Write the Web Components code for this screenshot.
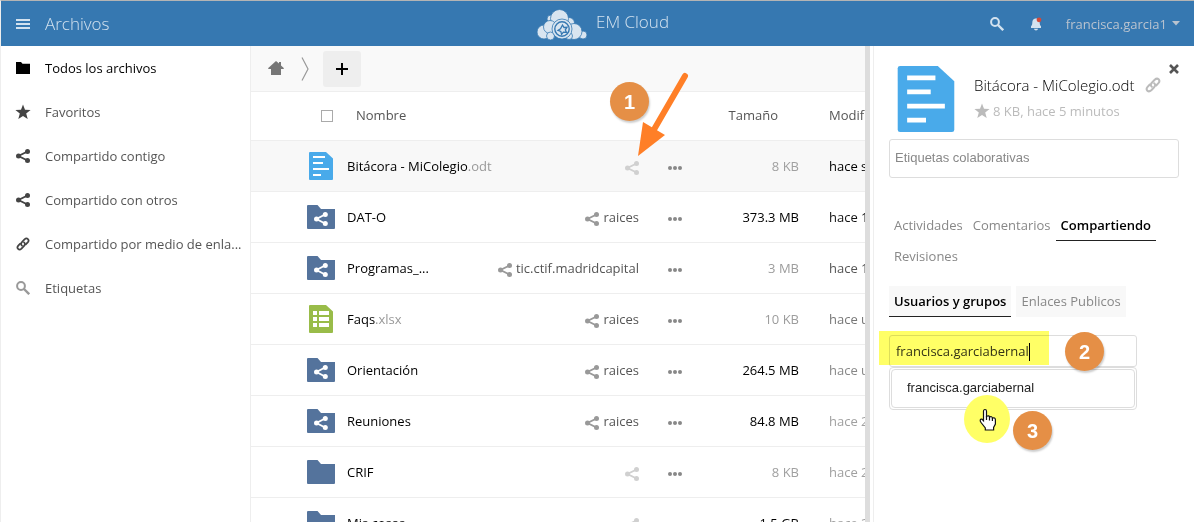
<!DOCTYPE html>
<html lang="es">
<head>
<meta charset="utf-8">
<title>Archivos - EM Cloud</title>
<style>
  html, body { height: 100%; }
  body { margin: 0; overflow: hidden; background: #fff; font: 13px/20px "Open Sans", "Liberation Sans", sans-serif; color: #000; }
</style>
</head>
<body>
<cloud-app>
  <top-bar slot="header" section="Archivos" brand="EM Cloud" user="francisca.garcia1"></top-bar>
  <side-nav slot="nav">
    <nav-item icon="folder" active>Todos los archivos</nav-item>
    <nav-item icon="star">Favoritos</nav-item>
    <nav-item icon="share">Compartido contigo</nav-item>
    <nav-item icon="share">Compartido con otros</nav-item>
    <nav-item icon="link">Compartido por medio de enla...</nav-item>
    <nav-item icon="search" faded>Etiquetas</nav-item>
  </side-nav>
  <file-browser slot="main"></file-browser>
  <details-panel slot="details"></details-panel>
</cloud-app>

<script>
const ICONS = {
  menu: ['0 0 14 10', '<path d="M0 0h14v2H0zM0 4h14v2H0zM0 8h14v2H0z"/>'],
  folder: ['0 0 14 12', '<path d="M0 0h5l1.5 1.7H14V12H0z"/>'],
  star: ['0 0 16 16', '<path d="M8 .6l2 5.1 5.6.3-4.400 3.500 1.500 5.600L8 12l-4.700 3.100 1.500-5.600L.4 6 6 5.700z"/>'],
  share: ['0 0 14 14', '<path d="M11.500 2.500L2.500 7l9 4.500" fill="none" stroke="currentColor" stroke-width="1.900"/><circle cx="11.500" cy="2.500" r="2.500"/><circle cx="2.500" cy="7" r="2.500"/><circle cx="11.500" cy="11.500" r="2.500"/>'],
  link: ['0 0 16 16', '<g fill="none" stroke="currentColor" stroke-width="2" stroke-linecap="round"><path d="M6.800 9.800C5 8.300 6 6.500 7.300 5.200l2.400-2.500c3-2.700 6.200.5 3.700 3.500l-2.200 2.300"/><path d="M9.200 6.200c1.800 1.500.8 3.300-.5 4.600l-2.400 2.500c-3 2.700-6.200-.5-3.700-3.500l2.200-2.300"/></g>'],
  search: ['0 0 14 14', '<circle cx="5" cy="5" r="3.900" fill="none" stroke="currentColor" stroke-width="2"/><path d="M8 8l5.200 5.200" stroke="currentColor" stroke-width="2.400"/>'],
  bell: ['0 0 12 14', '<path d="M6 1.500c-3 0-3.600 2.300-3.700 4.500C2.200 8 1.500 8.800 1 9.300V11h10V9.300c-.5-.5-1.200-1.300-1.300-3.300C9.600 3.800 9 1.500 6 1.500zM4 11.800h4C7.800 13 7 13.500 6 13.500S4.200 13 4 11.800z"/><circle cx="9" cy="2.800" r="2.400" fill="#d2493a"/>'],
  caret: ['0 0 8 5', '<path d="M0 0h8L4 4.500z"/>'],
  home: ['0 0 16 14', '<path d="M8 0l3 2.600V1h2v3.400L16 7.300l-.6.700H13v6H3V8H.6L0 7.300z"/>'],
  chevron: ['0 0 8 24', '<path d="M1 .5L7 12 1 23.500" fill="none" stroke="currentColor" stroke-width="1.200"/>'],
  plus: ['0 0 12 12', '<path d="M5 0h2v5h5v2H7v5H5V7H0V5h5z"/>'],
  more: ['0 0 14 4', '<circle cx="2" cy="2" r="2"/><circle cx="7" cy="2" r="2"/><circle cx="12" cy="2" r="2"/>'],
  close: ['0 0 10 10', '<path d="M1 1l8 8M9 1L1 9" stroke="currentColor" stroke-width="2.600"/>'],
  document: ['0 0 24 28', '<path d="M1 0h16l7 6.500V27a1 1 0 0 1-1 1H1a1 1 0 0 1-1-1V1a1 1 0 0 1 1-1z" fill="#49aaea"/><path d="M4 4h12v2H4zM4 10h10v2H4zM4 16h16v2H4zM4 22h8v2H4z" fill="#fff"/>'],
  sheet: ['0 0 24 28', '<path d="M1 0h16l7 6.500V27a1 1 0 0 1-1 1H1a1 1 0 0 1-1-1V1a1 1 0 0 1 1-1z" fill="#99bc49"/><path d="M4 6h4v4H4zM10 6h10v4H10zM4 12h4v4H4zM10 12h10v4H10zM4 18h4v4H4zM10 18h10v4H10z" fill="#fff"/>'],
  'big-folder': ['0 0 28 24', '<path d="M1 0h9.500L14 4h14v19a1 1 0 0 1-1 1H1a1 1 0 0 1-1-1V1a1 1 0 0 1 1-1z" fill="#54739c"/>'],
  'shared-folder': ['0 0 28 24', '<path d="M1 0h9.500L14 4h14v19a1 1 0 0 1-1 1H1a1 1 0 0 1-1-1V1a1 1 0 0 1 1-1z" fill="#54739c"/><path d="M18 9.500L9.500 14l8.500 4.500" fill="none" stroke="#fff" stroke-width="1.900"/><g fill="#fff"><circle cx="18.300" cy="9.500" r="2.500"/><circle cx="9.500" cy="14" r="2.500"/><circle cx="18.300" cy="18.500" r="2.500"/></g>'],
  logo: ['0 0 60 34', '<g stroke="#3678b1" stroke-width=".8"><circle cx="42" cy="16" r="5.500"/><circle cx="24" cy="12" r="4"/><circle cx="32.500" cy="11.500" r="9"/><circle cx="17" cy="25" r="7"/><circle cx="56" cy="28" r="4"/><circle cx="47" cy="24.500" r="8"/><circle cx="23" cy="20" r="6.500"/><circle cx="23.500" cy="29" r="4"/><circle cx="42" cy="29" r="3.500"/><circle cx="35" cy="22" r="10"/></g><circle cx="35" cy="22" r="7.200" fill="none" stroke="#3678b1" stroke-width="1.400"/><path d="M35.500 18l1.500 2.500 3 -.2-1.700 2.500 1.200 2.700-3.100-.3-1.800 2.200-.8-3-2.800-1.100 2.500-1.600z" fill="#d9e5f0" stroke="#3678b1" stroke-width="1.300"/>'],
};

function define(name, css, html, setup) {
  const template = document.createElement('template');
  customElements.define(name, class extends HTMLElement {
    connectedCallback() {
      if (this.shadowRoot) return;
      const root = this.attachShadow({ mode: 'open' });
      template.innerHTML = `<style>*{box-sizing:border-box}${css}</style>${typeof html === 'function' ? html(this) : html}`;
      root.append(template.content.cloneNode(true));
      if (setup) setup(root, this);
    }
  });
}

define('ui-icon', `:host{display:inline-flex;flex:none} svg{display:block;width:100%;height:100%;fill:currentColor}`,
  el => { const [box, body] = ICONS[el.getAttribute('name')]; return `<svg viewBox="${box}" aria-hidden="true">${body}</svg>`; });

define('step-badge', `
  :host{display:flex;align-items:center;justify-content:center;width:39px;height:39px;border-radius:50%;background:#e58f46;color:#fff;
    font:bold 20px/20px "Liberation Sans",Arial,sans-serif;box-shadow:1px 2px 2px rgba(0,0,0,.2)}`, `<slot></slot>`);

define('cloud-app', `
  :host{display:flex;flex-direction:column;height:100vh;border-top:1px solid #b4b4b4;border-left:1px solid #eee;box-sizing:border-box}
  .body{display:flex;flex:1;min-height:0}
  nav{flex:0 0 250px;border-right:1px solid #eee}
  main{flex:1;min-width:0;overflow:hidden;border-right:5px solid #ddd}
  aside{flex:0 0 324px;padding-left:3px}`,
  `<slot name="header"></slot><div class="body"><nav><slot name="nav"></slot></nav><main><slot name="main"></slot></main><aside><slot name="details"></slot></aside></div>`);

define('top-bar', `
  :host{display:block}
  header{display:grid;grid-template-columns:1fr auto 1fr;align-items:center;height:45px;padding:0 14px 0 15px;background:#3678b1;color:#d3e2ef}
  .left,.brand,.right{display:flex;align-items:center}
  button{display:flex;align-items:center;padding:0;border:0;background:none;color:inherit;font:inherit;cursor:pointer}
  .left{gap:15px;font-size:17px;line-height:24px;font-weight:300}
  .left a,.brand{color:inherit;text-decoration:none}
  .brand{gap:9px;font-size:17px;line-height:24px;font-weight:300}
  .brand span{padding-bottom:4px}
  .right{justify-content:flex-end}
  .menu ui-icon{width:14px;height:10px}
  .logo{width:60px;height:34px;color:#d9e5f0}
  .find ui-icon{width:14px;height:14px}
  .bell{margin:0 24px 0 26px}
  .bell ui-icon{width:12px;height:14px}
  .user{gap:5px;color:#b9c3cf}
  .user ui-icon{width:8px;height:5px}`,
  el => `<header>
    <div class="left"><button class="menu" aria-label="Menú"><ui-icon name="menu"></ui-icon></button><a href="#">${el.getAttribute('section')}</a></div>
    <a class="brand" href="#"><ui-icon class="logo" name="logo"></ui-icon><span>${el.getAttribute('brand')}</span></a>
    <div class="right"><button class="find" aria-label="Buscar"><ui-icon name="search"></ui-icon></button>
      <button class="bell" aria-label="Notificaciones"><ui-icon name="bell"></ui-icon></button>
      <button class="user">${el.getAttribute('user')}<ui-icon name="caret"></ui-icon></button></div>
  </header>`);

define('side-nav', `:host{display:block}`, `<slot></slot>`);

define('nav-item', `
  :host{display:block;color:#555}
  :host([active]){color:#000}
  a{display:flex;align-items:center;gap:15px;height:44px;padding:0 8px 0 15px;color:inherit;text-decoration:none;white-space:nowrap}
  ui-icon{width:14px;height:14px;color:#444}
  .star{width:16px;height:16px;margin:0 -1px}
  .folder{height:12px;color:#000}
  :host([faded]) ui-icon{color:#999}`,
  el => `<a href="#"><ui-icon class="${el.getAttribute('icon')}" name="${el.getAttribute('icon')}"></ui-icon><slot></slot></a>`);

const FILES = [
  { icon: 'document', name: 'Bitácora - MiColegio', ext: '.odt', size: '8 KB', sizeColor: '#a0a0a0', date: 'hace s', dateColor: '#000', selected: true },
  { icon: 'shared-folder', name: 'DAT-O', share: 'raices', size: '373.3 MB', sizeColor: '#000', date: 'hace 1', dateColor: '#111' },
  { icon: 'shared-folder', name: 'Programas_...', share: 'tic.ctif.madridcapital', size: '3 MB', sizeColor: '#9c9c9c', date: 'hace 1', dateColor: '#555' },
  { icon: 'sheet', name: 'Faqs', ext: '.xlsx', share: 'raices', size: '10 KB', sizeColor: '#9c9c9c', date: 'hace u', dateColor: '#777' },
  { icon: 'shared-folder', name: 'Orientación', share: 'raices', size: '264.5 MB', sizeColor: '#000', date: 'hace u', dateColor: '#888' },
  { icon: 'shared-folder', name: 'Reuniones', share: 'raices', size: '84.8 MB', sizeColor: '#000', date: 'hace 2', dateColor: '#a0a0a0' },
  { icon: 'big-folder', name: 'CRIF', size: '8 KB', sizeColor: '#a0a0a0', date: 'hace 2', dateColor: '#a0a0a0' },
  { icon: 'big-folder', name: 'Mis cosas', size: '1.5 GB', sizeColor: '#000', date: 'hace 2', dateColor: '#a0a0a0' },
];

define('file-table', `
  :host{display:block}
  table{width:100%;table-layout:fixed;border-collapse:separate;border-spacing:0}
  th,td{padding:0;border-bottom:1px solid #eee;white-space:nowrap;overflow:hidden;font-weight:400;text-align:left}
  th{height:49px;padding-bottom:2px;color:#555}
  td{height:51px}
  .pick{width:96px;text-align:right}
  .size{width:117px;text-align:right}
  .date{width:66px;padding-left:30px}
  th.pick{padding-right:14px} th.name{padding-left:9px} th.size{padding-right:21px}
  td.pick{padding-right:12px}
  td.pick.file{padding-right:14px}
  tr.selected td{background:#f8f8f8}
  input{appearance:none;display:block;width:12px;height:12px;margin:1px 0 0 auto;border:1px solid #aaa;background:#fff}
  td.pick ui-icon{display:block;width:28px;height:24px;margin-left:auto}
  td.pick.file ui-icon{width:24px;height:28px}
  .row{display:flex;align-items:center}
  a{color:inherit;text-decoration:none}
  .title{flex:1}
  .ext{color:#999}
  .share,.more{display:flex;align-items:center;padding:0;border:0;background:none}
  .share{gap:4px;color:#555}
  .share ui-icon,.more ui-icon{position:relative;top:2px;width:14px;height:14px;color:#999}
  .share.none ui-icon{color:#d0d0d0}
  .more{margin-left:29px}
  .more ui-icon{height:4px;color:#888}`,
  () => `<table><thead><tr><th class="pick"><input type="checkbox" aria-label="Seleccionar todo"></th><th class="name">Nombre</th><th class="size">Tamaño</th><th class="date">Modif</th></tr></thead><tbody>${
    FILES.map(f => `<tr class="${f.selected ? 'selected' : ''}"><td class="pick ${f.icon.includes('folder') ? '' : 'file'}"><ui-icon name="${f.icon}"></ui-icon></td>
    <td><div class="row"><a class="title" href="#">${f.name}<span class="ext">${f.ext || ''}</span></a>
    <a class="share ${f.share ? '' : 'none'}" href="#" aria-label="Compartir"><ui-icon name="share"></ui-icon>${f.share ? `<span>${f.share}</span>` : ''}</a>
    <button class="more" aria-label="Acciones"><ui-icon name="more"></ui-icon></button></div></td>
    <td class="size" style="color:${f.sizeColor}">${f.size}</td><td class="date" style="color:${f.dateColor}">${f.date}</td></tr>`).join('')
  }</tbody></table>`);

define('file-browser', `
  :host{display:block;position:relative}
  .bar{display:flex;align-items:center;height:46px;padding-left:17px;background:#f9f9f9;border-bottom:1px solid #eee}
  .home{display:flex;color:#777}
  .home ui-icon{width:16px;height:14px;margin-bottom:2px}
  .chevron{width:8px;height:24px;margin:0 14px 0 17px;color:#999}
  button{display:flex;align-items:center;justify-content:center;width:38px;height:36px;padding:0;border:0;border-radius:3px;background:#eee;color:#000}
  button ui-icon{width:12px;height:12px}
  step-badge{position:absolute;right:216px;top:36px}
  .arrow{position:absolute;right:176px;top:25px;width:54px;height:88px}`,
  `<div class="bar"><a class="home" href="#" aria-label="Inicio"><ui-icon name="home"></ui-icon></a><ui-icon class="chevron" name="chevron"></ui-icon><button aria-label="Nuevo"><ui-icon name="plus"></ui-icon></button></div>
  <file-table></file-table>
  <step-badge>1</step-badge>
  <svg class="arrow" viewBox="0 0 54 88" aria-hidden="true"><path d="M50 5L17 62" stroke="#ff7f27" stroke-width="6" stroke-linecap="round"/><path d="M3 85l5-34 22 13z" fill="#ff7f27"/></svg>`);

define('tab-item', `
  :host{display:block}
  button{display:block;height:31px;padding:0 5px;border:0;border-bottom:1px solid transparent;background:none;color:#888;font:inherit}
  :host([boxed]) button{background:#f8f8f8}
  :host([current]) button{color:#000;font-weight:600;border-bottom-color:#222}`,
  el => `<button role="tab" aria-selected="${el.hasAttribute('current')}"><slot></slot></button>`);

define('share-picker', `
  :host{display:block;position:relative;width:248px}
  input{display:block;width:100%;height:32px;padding:0 6px;border:1px solid #ddd;border-radius:3px;background:#fff;color:#333;font:inherit;outline:0}
  ul{list-style:none;margin:0;padding:1px;border:1px solid #ddd;border-radius:4px}
  button{display:block;width:100%;height:39px;padding:0 0 2px 15px;border:1px solid #ddd;border-radius:4px;background:#fff;color:#222;text-align:left;font:13px/20px "Liberation Sans",Arial,sans-serif}
  .mark{position:absolute;left:-10px;top:-4px;width:170px;height:34px;background:#ff6;mix-blend-mode:multiply}
  .caret{position:absolute;left:140px;top:8px;width:1px;height:18px;background:#000}
  .spot{position:absolute;left:75px;top:60px;width:46px;height:48px;border-radius:50%;background:#ff6}
  .hand{position:absolute;left:90px;top:73px;width:18px;height:23px}
  .two{position:absolute;left:176px;top:-3px}
  .three{position:absolute;left:124px;top:76px}`,
  `<input type="text" value="francisca.garciabernal" aria-label="Compartir con usuarios o grupos">
  <ul><li><button>francisca.garciabernal</button></li></ul>
  <div class="mark"></div><div class="caret"></div><div class="spot"></div>
  <svg class="hand" viewBox="0 0 18 23" aria-hidden="true"><path d="M6 1.500c1 0 1.500.8 1.500 1.800v5c2-1 2.800-.4 3 .7 1.500-.8 2.700-.2 2.900 1 1.800-.6 3 .2 3 1.800v4.200l-1.800 3.500V22H6.300v-2L2 14.500c-1.500-2-.8-3.700.9-3.400l1.600 1.700V3.300c0-1 .5-1.800 1.500-1.800z" fill="#fff" stroke="#111" stroke-width="1.200"/><path d="M7.500 8v4M10.500 9v3.500M13.400 10v3" fill="none" stroke="#111" stroke-width="1.200"/></svg>
  <step-badge class="two">2</step-badge><step-badge class="three">3</step-badge>`);

define('details-panel', `
  :host{display:block;position:relative;height:100%;padding:20px 15px 0;border-left:1px solid #eee;box-sizing:border-box}
  .top{display:flex;gap:19px;padding-left:8px;height:66px}
  .thumb{width:58px;height:66px}
  h2{display:flex;align-items:center;gap:11px;margin:8px 0 5px;font-size:15px;line-height:22px;font-weight:300;color:#000;white-space:nowrap}
  h2 ui-icon{width:16px;height:16px;color:#bbb}
  .meta{display:flex;align-items:center;gap:3px;margin:0;color:#bbb;white-space:nowrap}
  .meta ui-icon{width:16px;height:16px}
  .close{position:absolute;right:15px;top:18px;display:flex;padding:0;border:0;background:none;color:#555}
  .close ui-icon{width:10px;height:10px}
  .tags{display:block;width:100%;height:39px;margin:7px 0 32px;padding:0 5px 2px;border:1px solid #ddd;border-radius:3px;font:13px/20px "Liberation Sans",Arial,sans-serif}
  .tags::placeholder{color:#888;opacity:1}
  .tabs{display:flex;flex-wrap:wrap;margin-bottom:14px}
  .sub{display:flex;gap:5px;margin-bottom:18px}`,
  `<button class="close" aria-label="Cerrar"><ui-icon name="close"></ui-icon></button>
  <div class="top"><ui-icon class="thumb" name="document"></ui-icon>
    <div><h2>Bitácora - MiColegio.odt<ui-icon name="link"></ui-icon></h2><p class="meta"><ui-icon name="star"></ui-icon>8 KB, hace 5 minutos</p></div></div>
  <input class="tags" type="text" placeholder="Etiquetas colaborativas" aria-label="Etiquetas colaborativas">
  <div class="tabs" role="tablist"><tab-item>Actividades</tab-item><tab-item>Comentarios</tab-item><tab-item current>Compartiendo</tab-item><tab-item>Revisiones</tab-item></div>
  <div class="sub" role="tablist"><tab-item boxed current>Usuarios y grupos</tab-item><tab-item boxed>Enlaces Publicos</tab-item></div>
  <share-picker></share-picker>`);
</script>
</body>
</html>
